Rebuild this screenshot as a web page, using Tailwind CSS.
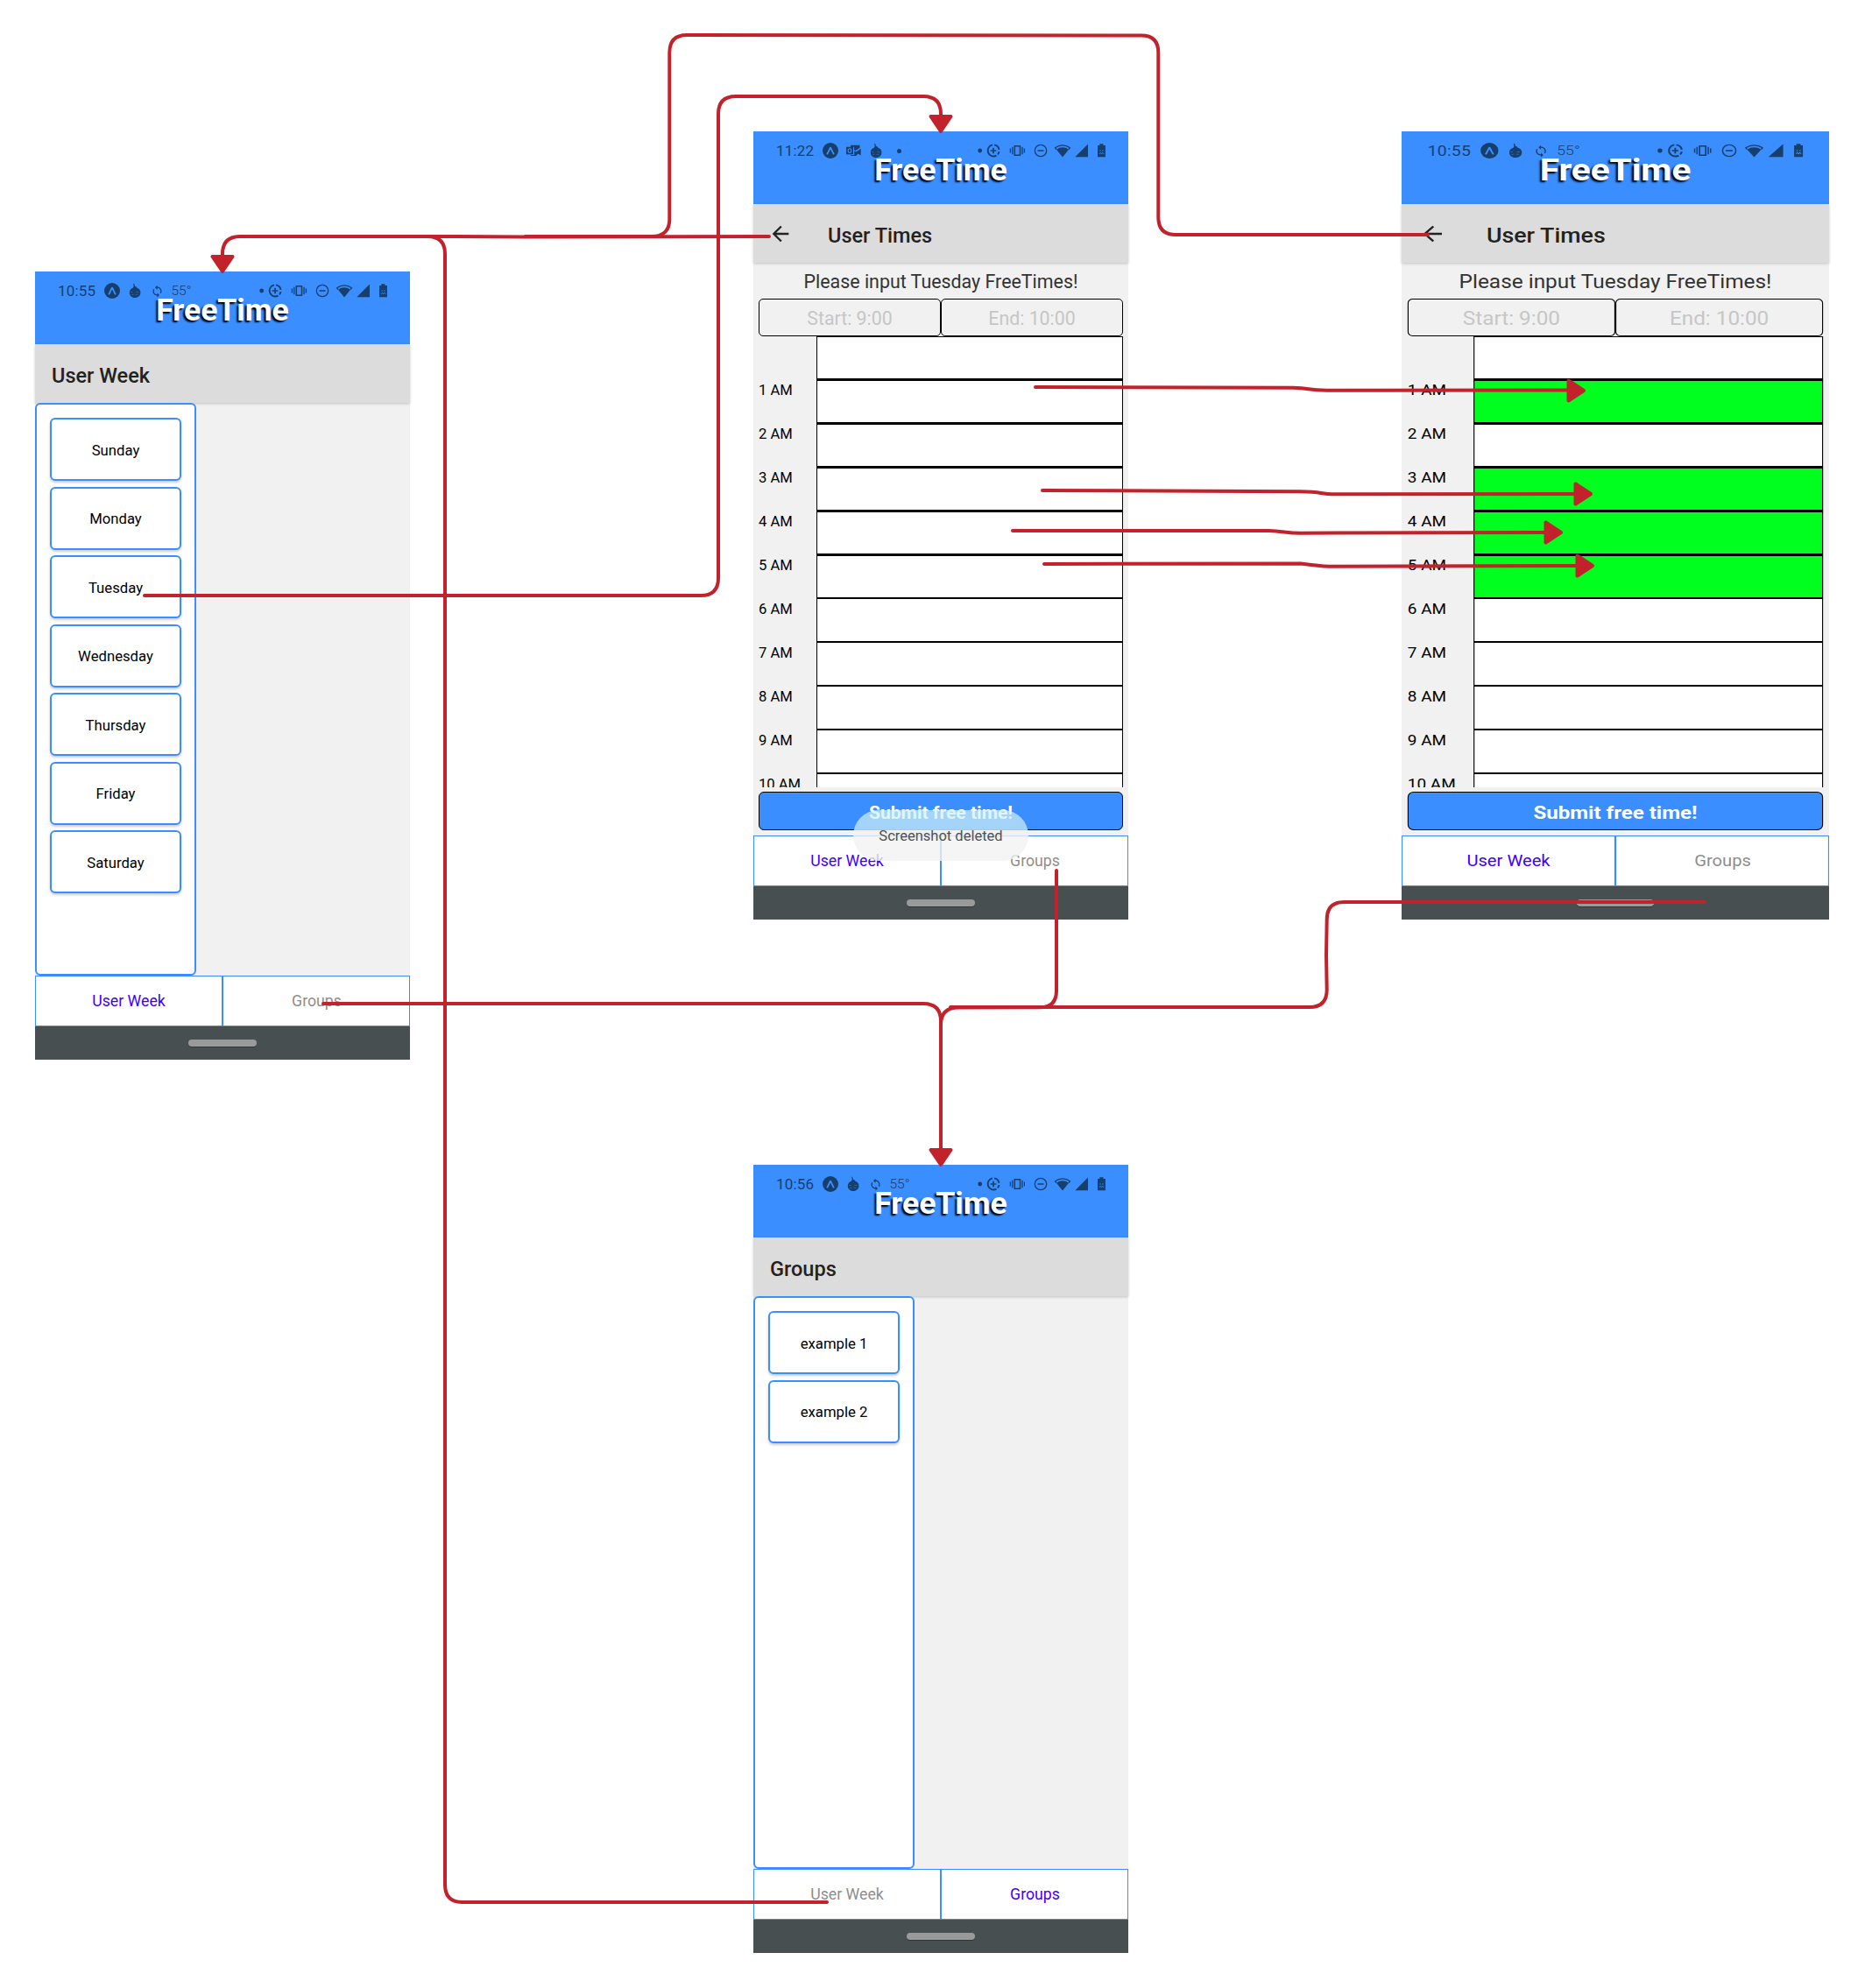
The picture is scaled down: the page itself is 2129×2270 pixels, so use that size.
<!DOCTYPE html>
<html lang="en">
<head>
<meta charset="utf-8">
<title>FreeTime screen flow</title>
<script src="https://cdn.jsdelivr.net/npm/@tailwindcss/browser@4"></script>
</head>
<body class="bg-white">
<svg class="hidden">
  <symbol id="expo" viewBox="0 0 18 18"><circle cx="9" cy="9" r="9" fill="#173f6b"/><path d="M5.400 12.600C6.800 10.800 7.800 7.400 9 5.600c1.200 1.800 2.200 5.200 3.600 7" fill="none" stroke="#3a8eff" stroke-width="1.800" stroke-linecap="round" stroke-linejoin="round"/></symbol>
  <symbol id="pumpkin" viewBox="0 0 14 18"><path d="M5 0.500c1.500.6 2 2 2 3.500l1.500.2c.3 1 .7 1.400 1.500 1.800 2.200.8 3.400 2.700 3.400 5 0 3.600-2.600 6-6.400 6S.800 14.600.8 11c0-2.600 1.500-4.400 4-5.200C5.800 4.500 5.800 2.500 5 .500z" fill="#173f6b"/><path d="M2 10.500h2.500m4 0h3M3 13.300h2.500m2 0h3" stroke="#2b68ad" stroke-width=".9"/></symbol>
  <symbol id="sync" viewBox="0 0 24 24"><path fill="#173f6b" d="M12 4V1L8 5l4 4V6c3.310 0 6 2.690 6 6 0 1.010-.25 1.970-.7 2.800l1.460 1.460C19.540 15.030 20 13.570 20 12c0-4.420-3.580-8-8-8zm0 14c-3.310 0-6-2.690-6-6 0-1.010.25-1.970.7-2.800L5.240 7.740C4.460 8.970 4 10.430 4 12c0 4.420 3.580 8 8 8v3l4-4-4-4v3z"/></symbol>
  <symbol id="outlook" viewBox="0 0 17 14"><path fill="#173f6b" d="M0 2.800h8v8.400H0zM5 .7h10.500v3L10.500 7 9 6V2.800H5zM9.200 7.600l2.600.6 4.900-3.400v7.600l-3.200-1.800-2.500 2.400H5V12h4.200z"/><ellipse cx="4" cy="7" rx="1.900" ry="2.300" fill="none" stroke="#3a8eff" stroke-width="1.100"/></symbol>
  <symbol id="system" viewBox="0 0 146 18">
    <g fill="#173f6b">
      <circle cx="2.700" cy="9" r="2.400"/>
      <path d="M97 16.500 90 7.700a11.500 11.500 0 0 1 14 0z"/>
      <path d="M111.300 16.200H126V1.500z"/>
      <path d="M137 3h2.300V1.300h4.200V3h2.400v13.300H137z"/>
    </g>
    <path d="m90 7.700-1.400-1.900a13.700 13.700 0 0 1 16.800 0L104 7.700" fill="none" stroke="#173f6b" stroke-width="1.300"/>
    <path d="M139.300 9h1.500m1.400 0h1.500M138.900 12.800l1.300-1.500 1.300 1.500 1.300-1.500 1.300 1.500" stroke="#3a8eff" stroke-width=".9" fill="none"/>
    <g fill="none" stroke="#173f6b" stroke-width="1.700">
      <path d="M19 2.400a6.600 6.600 0 0 1 5.500 5.500M24.500 10.100a6.600 6.600 0 0 1-1.600 3.200M21.500 14.600A6.600 6.600 0 1 1 17 2.400" stroke-width="1.900"/>
      <path d="M18 5.700v6.600M14.700 9h6.600"/>
      <rect x="42.300" y="3.800" width="6.200" height="10.400" stroke-width="1.500"/>
      <path d="M39.800 4.800v8.400m11.200-8.400v8.400M37.400 6.600v4.800m16-4.800v4.800" stroke-width="1.300"/>
      <circle cx="72" cy="9" r="6.700" stroke-width="1.300"/>
      <path d="M68.500 9h7" stroke-width="1.500"/>
    </g>
  </symbol>
  <symbol id="back" viewBox="0 0 24 24"><path fill="none" stroke="#222" stroke-width="2" d="M20 12H5.400m7.300-7.300L5.400 12l7.300 7.300"/></symbol>
</svg>

<main class="relative h-[2270px] w-[2129px] overflow-hidden bg-white font-[Roboto,sans-serif] text-black">

  <!-- User Week -->
  <section class="absolute left-[40px] top-[310px] flex h-[900px] w-[428px] flex-col bg-[#f1f1f1]">
    <header class="flex h-[83px] shrink-0 flex-col bg-[#3a8eff]">
      <div class="flex h-[44px] items-center pl-[26px] text-[#173f6b]">
        <span class="w-[52.500px] text-[17px] leading-5 tracking-[0.2px]">10:55</span>
        <svg class="size-[18px]"><use href="#expo"/></svg>
        <svg class="ml-[10px] h-[18px] w-[14px]"><use href="#pumpkin"/></svg>
        <svg class="ml-[11.500px] size-[15px]"><use href="#sync"/></svg>
        <span class="ml-[8.500px] text-[15.500px] font-light leading-5">55°</span>
        <svg class="ml-auto mr-[26px] h-[18px] w-[146px]"><use href="#system"/></svg>
      </div>
      <h1 class="-mt-[20px] text-center text-[35.500px] font-bold leading-[40px] text-white [text-shadow:-2px_2px_2px_#000]">FreeTime</h1>
    </header>
    <div class="z-10 flex h-[67px] shrink-0 items-center bg-[#dcdcdc] pl-[19px] pt-[4px] shadow-[0_1px_3px_#0003]"><h2 class="text-[23.500px] font-medium leading-7 text-[#222]">User Week</h2></div>
    <div class="z-10 flex h-[654px] w-[184px] shrink-0 flex-col gap-[6.500px] rounded-[6px] border-2 border-[#3a8eff] bg-white px-[15px] pt-[15px]">
      <div class="flex h-[72px] items-center justify-center rounded-[6px] border-2 border-[#3a8eff] bg-white pt-[4px] text-[16.700px] shadow-[0_2px_3px_#0003]">Sunday</div>
      <div class="flex h-[72px] items-center justify-center rounded-[6px] border-2 border-[#3a8eff] bg-white pt-[3px] text-[16.700px] shadow-[0_2px_3px_#0003]">Monday</div>
      <div class="flex h-[72px] items-center justify-center rounded-[6px] border-2 border-[#3a8eff] bg-white pt-[4px] text-[16.700px] shadow-[0_2px_3px_#0003]">Tuesday</div>
      <div class="flex h-[72px] items-center justify-center rounded-[6px] border-2 border-[#3a8eff] bg-white pt-[3px] text-[16.700px] shadow-[0_2px_3px_#0003]">Wednesday</div>
      <div class="flex h-[72px] items-center justify-center rounded-[6px] border-2 border-[#3a8eff] bg-white pt-[4px] text-[16.700px] shadow-[0_2px_3px_#0003]">Thursday</div>
      <div class="flex h-[72px] items-center justify-center rounded-[6px] border-2 border-[#3a8eff] bg-white pt-[3px] text-[16.700px] shadow-[0_2px_3px_#0003]">Friday</div>
      <div class="flex h-[72px] items-center justify-center rounded-[6px] border-2 border-[#3a8eff] bg-white pt-[4px] text-[16.700px] shadow-[0_2px_3px_#0003]">Saturday</div>
    </div>
    <nav class="grid h-[58px] shrink-0 grid-cols-2 bg-white text-[17.700px]">
      <div class="flex items-center justify-center border border-[#3a8eff] text-[#3d00ff]">User Week</div>
      <div class="flex items-center justify-center border border-[#3a8eff] pl-px text-[#8e8e8e]">Groups</div>
    </nav>
    <div class="flex h-[38px] items-center justify-center bg-[#474f51]"><div class="h-[8px] w-[78px] rounded-full bg-[#999b9b] shadow-[0_1px_0_#303638]"></div></div>
  </section>

  <!-- User Times, empty -->
  <section class="absolute left-[860px] top-[150px] flex h-[900px] w-[428px] flex-col bg-[#f1f1f1]">
    <header class="flex h-[83px] shrink-0 flex-col bg-[#3a8eff]">
      <div class="flex h-[44px] items-center pl-[26px] text-[#173f6b]">
        <span class="w-[52.500px] text-[17px] leading-5 tracking-[0.2px]">11:22</span>
        <svg class="size-[18px]"><use href="#expo"/></svg>
        <svg class="ml-[9px] h-[14px] w-[17px]"><use href="#outlook"/></svg>
        <svg class="ml-[10.500px] h-[18px] w-[14px]"><use href="#pumpkin"/></svg>
        <span class="ml-[17px] size-[5px] rounded-full bg-[#173f6b]"></span>
        <svg class="ml-auto mr-[26px] h-[18px] w-[146px]"><use href="#system"/></svg>
      </div>
      <h1 class="-mt-[20px] text-center text-[35.500px] font-bold leading-[40px] text-white [text-shadow:-2px_2px_2px_#000]">FreeTime</h1>
    </header>
    <div class="z-10 flex h-[67px] shrink-0 items-center gap-[40px] bg-[#dcdcdc] pl-[17px] shadow-[0_1px_3px_#0003]">
      <svg class="size-[28px]"><use href="#back"/></svg>
      <h2 class="pt-[4px] text-[23.500px] font-medium leading-7 text-[#222]">User Times</h2>
    </div>
    <p class="h-[41px] shrink-0 pt-[8px] text-center text-[21.400px] leading-7 text-[#333]">Please input Tuesday FreeTimes!</p>
    <div class="mx-[6px] grid h-[43px] shrink-0 grid-cols-2 text-[21.300px] text-[#c6c6c6]">
      <div class="flex items-center justify-center rounded-[5px] border border-black pt-[3px]">Start: 9:00</div>
      <div class="flex items-center justify-center rounded-[5px] border border-black pt-[3px]">End: 10:00</div>
    </div>
    <div class="flex h-[515px] shrink-0 overflow-hidden pl-[6px] pr-[6px]">
      <div class="flex w-[66px] shrink-0 flex-col pt-[49px] text-[16.600px] leading-[25px]">
        <span class="h-[50px] shrink-0">1 AM</span><span class="h-[50px] shrink-0">2 AM</span><span class="h-[50px] shrink-0">3 AM</span><span class="h-[50px] shrink-0">4 AM</span><span class="h-[50px] shrink-0">5 AM</span><span class="h-[50px] shrink-0">6 AM</span><span class="h-[50px] shrink-0">7 AM</span><span class="h-[50px] shrink-0">8 AM</span><span class="h-[50px] shrink-0">9 AM</span><span class="h-[50px] shrink-0">10 AM</span>
      </div>
      <div class="flex flex-1 flex-col">
        <div class="h-[49px] shrink-0 border border-black bg-white"></div>
        <div class="h-[50px] shrink-0 border border-t-2 border-black bg-white"></div>
        <div class="h-[50px] shrink-0 border border-t-2 border-black bg-white"></div>
        <div class="h-[50px] shrink-0 border border-t-2 border-black bg-white"></div>
        <div class="h-[50px] shrink-0 border border-t-2 border-black bg-white"></div>
        <div class="h-[50px] shrink-0 border border-t-2 border-black bg-white"></div>
        <div class="h-[50px] shrink-0 border border-black bg-white"></div>
        <div class="h-[50px] shrink-0 border border-black bg-white"></div>
        <div class="h-[50px] shrink-0 border border-black bg-white"></div>
        <div class="h-[50px] shrink-0 border border-black bg-white"></div>
        <div class="h-[50px] shrink-0 border border-black bg-white"></div>
      </div>
    </div>
    <div class="mx-[6px] mb-[6px] mt-[5px] flex h-[44px] shrink-0 items-center justify-center rounded-[6px] border border-black bg-[#3a8eff] pt-[4px] text-[21.100px] font-bold text-white">Submit free time!</div>
    <nav class="grid h-[58px] shrink-0 grid-cols-2 bg-white text-[17.700px]">
      <div class="flex items-center justify-center border border-[#3a8eff] text-[#3d00ff]">User Week</div>
      <div class="flex items-center justify-center border border-[#3a8eff] pl-px text-[#8e8e8e]">Groups</div>
    </nav>
    <div class="flex h-[38px] items-center justify-center bg-[#474f51]"><div class="h-[8px] w-[78px] rounded-full bg-[#999b9b] shadow-[0_1px_0_#303638]"></div></div>
    <div class="absolute left-[114px] top-[775px] flex h-[58px] w-[200px] items-center justify-center rounded-full bg-[linear-gradient(#d0f1f6b3_0_22px,#f2f2f2cc_22px)] pt-[3px] text-[16.500px] text-[#505050]">Screenshot deleted</div>
  </section>

  <!-- User Times, hours selected -->
  <section class="absolute left-[1600px] top-[150px] flex h-[900px] w-[428px] origin-top-left scale-x-[1.1402] flex-col bg-[#f1f1f1]">
    <header class="flex h-[83px] shrink-0 flex-col bg-[#3a8eff]">
      <div class="flex h-[44px] items-center pl-[26px] text-[#173f6b]">
        <span class="w-[52.500px] text-[17px] leading-5 tracking-[0.2px]">10:55</span>
        <svg class="size-[18px]"><use href="#expo"/></svg>
        <svg class="ml-[10px] h-[18px] w-[14px]"><use href="#pumpkin"/></svg>
        <svg class="ml-[11.500px] size-[15px]"><use href="#sync"/></svg>
        <span class="ml-[8.500px] text-[15.500px] font-light leading-5">55°</span>
        <svg class="ml-auto mr-[26px] h-[18px] w-[146px]"><use href="#system"/></svg>
      </div>
      <h1 class="-mt-[20px] text-center text-[35.500px] font-bold leading-[40px] text-white [text-shadow:-2px_2px_2px_#000]">FreeTime</h1>
    </header>
    <div class="z-10 flex h-[67px] shrink-0 items-center gap-[40px] bg-[#dcdcdc] pl-[17px] shadow-[0_1px_3px_#0003]">
      <svg class="size-[28px]"><use href="#back"/></svg>
      <h2 class="pt-[4px] text-[23.500px] font-medium leading-7 text-[#222]">User Times</h2>
    </div>
    <p class="h-[41px] shrink-0 pt-[8px] text-center text-[21.400px] leading-7 text-[#333]">Please input Tuesday FreeTimes!</p>
    <div class="mx-[6px] grid h-[43px] shrink-0 grid-cols-2 text-[21.300px] text-[#c6c6c6]">
      <div class="flex items-center justify-center rounded-[5px] border border-black pt-[3px]">Start: 9:00</div>
      <div class="flex items-center justify-center rounded-[5px] border border-black pt-[3px]">End: 10:00</div>
    </div>
    <div class="flex h-[515px] shrink-0 overflow-hidden pl-[6px] pr-[6px]">
      <div class="flex w-[66px] shrink-0 flex-col pt-[49px] text-[16.600px] leading-[25px]">
        <span class="h-[50px] shrink-0">1 AM</span><span class="h-[50px] shrink-0">2 AM</span><span class="h-[50px] shrink-0">3 AM</span><span class="h-[50px] shrink-0">4 AM</span><span class="h-[50px] shrink-0">5 AM</span><span class="h-[50px] shrink-0">6 AM</span><span class="h-[50px] shrink-0">7 AM</span><span class="h-[50px] shrink-0">8 AM</span><span class="h-[50px] shrink-0">9 AM</span><span class="h-[50px] shrink-0">10 AM</span>
      </div>
      <div class="flex flex-1 flex-col">
        <div class="h-[49px] shrink-0 border border-black bg-white"></div>
        <div class="h-[50px] shrink-0 border border-t-2 border-black bg-[#00ff1e]"></div>
        <div class="h-[50px] shrink-0 border border-t-2 border-black bg-white"></div>
        <div class="h-[50px] shrink-0 border border-t-2 border-black bg-[#00ff1e]"></div>
        <div class="h-[50px] shrink-0 border border-t-2 border-black bg-[#00ff1e]"></div>
        <div class="h-[50px] shrink-0 border border-t-2 border-black bg-[#00ff1e]"></div>
        <div class="h-[50px] shrink-0 border border-black bg-white"></div>
        <div class="h-[50px] shrink-0 border border-black bg-white"></div>
        <div class="h-[50px] shrink-0 border border-black bg-white"></div>
        <div class="h-[50px] shrink-0 border border-black bg-white"></div>
        <div class="h-[50px] shrink-0 border border-black bg-white"></div>
      </div>
    </div>
    <div class="mx-[6px] mb-[6px] mt-[5px] flex h-[44px] shrink-0 items-center justify-center rounded-[6px] border border-black bg-[#3a8eff] pt-[4px] text-[21.100px] font-bold text-white">Submit free time!</div>
    <nav class="grid h-[58px] shrink-0 grid-cols-2 bg-white text-[17.700px]">
      <div class="flex items-center justify-center border border-[#3a8eff] text-[#3d00ff]">User Week</div>
      <div class="flex items-center justify-center border border-[#3a8eff] pl-px text-[#8e8e8e]">Groups</div>
    </nav>
    <div class="flex h-[38px] items-center justify-center bg-[#474f51]"><div class="h-[8px] w-[78px] rounded-full bg-[#999b9b] shadow-[0_1px_0_#303638]"></div></div>
  </section>

  <!-- Groups -->
  <section class="absolute left-[860px] top-[1330px] flex h-[900px] w-[428px] flex-col bg-[#f1f1f1]">
    <header class="flex h-[83px] shrink-0 flex-col bg-[#3a8eff]">
      <div class="flex h-[44px] items-center pl-[26px] text-[#173f6b]">
        <span class="w-[52.500px] text-[17px] leading-5 tracking-[0.2px]">10:56</span>
        <svg class="size-[18px]"><use href="#expo"/></svg>
        <svg class="ml-[10px] h-[18px] w-[14px]"><use href="#pumpkin"/></svg>
        <svg class="ml-[11.500px] size-[15px]"><use href="#sync"/></svg>
        <span class="ml-[8.500px] text-[15.500px] font-light leading-5">55°</span>
        <svg class="ml-auto mr-[26px] h-[18px] w-[146px]"><use href="#system"/></svg>
      </div>
      <h1 class="-mt-[20px] text-center text-[35.500px] font-bold leading-[40px] text-white [text-shadow:-2px_2px_2px_#000]">FreeTime</h1>
    </header>
    <div class="z-10 flex h-[67px] shrink-0 items-center bg-[#dcdcdc] pl-[19px] pt-[4px] shadow-[0_1px_3px_#0003]"><h2 class="text-[23.500px] font-medium leading-7 text-[#222]">Groups</h2></div>
    <div class="z-10 flex h-[654px] w-[184px] shrink-0 flex-col gap-[6.500px] rounded-[6px] border-2 border-[#3a8eff] bg-white px-[15px] pt-[15px]">
      <div class="flex h-[72px] items-center justify-center rounded-[6px] border-2 border-[#3a8eff] bg-white pt-[4px] text-[16.700px] shadow-[0_2px_3px_#0003]">example 1</div>
      <div class="flex h-[72px] items-center justify-center rounded-[6px] border-2 border-[#3a8eff] bg-white pt-[3px] text-[16.700px] shadow-[0_2px_3px_#0003]">example 2</div>
    </div>
    <nav class="grid h-[58px] shrink-0 grid-cols-2 bg-white text-[17.700px]">
      <div class="flex items-center justify-center border border-[#3a8eff] text-[#8e8e8e]">User Week</div>
      <div class="flex items-center justify-center border border-[#3a8eff] pl-px text-[#3d00ff]">Groups</div>
    </nav>
    <div class="flex h-[38px] items-center justify-center bg-[#474f51]"><div class="h-[8px] w-[78px] rounded-full bg-[#999b9b] shadow-[0_1px_0_#303638]"></div></div>
  </section>

  <!-- Connectors between screens -->
  <svg class="absolute inset-0 z-20" width="2129" height="2270" viewBox="0 0 2129 2270">
    <g fill="none" stroke="#c1222c" stroke-width="4" stroke-linecap="round" stroke-linejoin="round">
      <path d="M878 270 600 270.500 520 270H274Q254 270 254 290V294"/>
      <path d="M1630 268H1342Q1322.300 268 1322.300 248V60Q1322.300 40.500 1303 40.500L784 40Q764.300 40 764.300 60V250Q764.300 270 744 270H600"/>
      <path d="M165 680H800Q820 680 820 660V130Q820 110 840 110H1054Q1074 110 1074 130V134"/>
      <path d="M369 1146H1054Q1074 1146 1074 1166V1314"/>
      <path d="M1206 994V1131Q1206 1150 1188 1150.200L1094 1150.500Q1074 1150.500 1074 1170"/>
      <path d="M1946 1030H1534Q1514.700 1030 1514.700 1050L1514 1090 1514.700 1130Q1514.700 1150 1495 1150H1085"/>
      <path d="M944 2172H528Q508 2172 508 2152V290Q508 270 488 270H470"/>
      <path d="M1182 442 1476 442.800Q1486 443.200 1494 444.300T1515 445.700L1790 445.500"/>
      <path d="M1190 560 1484 561.300Q1500 561.500 1508 563T1530 564.200L1798 564"/>
      <path d="M1156 606H1448Q1456 606.200 1466 607.500T1486 608.700L1764 608"/>
      <path d="M1192 644 1485 643.400Q1495 644.500 1504 645.800T1522 646.700L1800 646"/>
    </g>
    <g fill="#c1222c" stroke="#c1222c" stroke-width="4" stroke-linejoin="round">
      <path d="M242.500 293h23L254 310z"/>
      <path d="M1062.500 133h23L1074 150z"/>
      <path d="M1062.500 1313h23L1074 1330z"/>
      <path d="M1790.500 434.500v23l17.500-11.500z"/>
      <path d="M1798.500 552.500v23l17.500-11.500z"/>
      <path d="M1764.500 596.500v23l17.500-11.500z"/>
      <path d="M1800.500 634.500v23l17.500-11.500z"/>
    </g>
  </svg>
</main>
</body>
</html>
